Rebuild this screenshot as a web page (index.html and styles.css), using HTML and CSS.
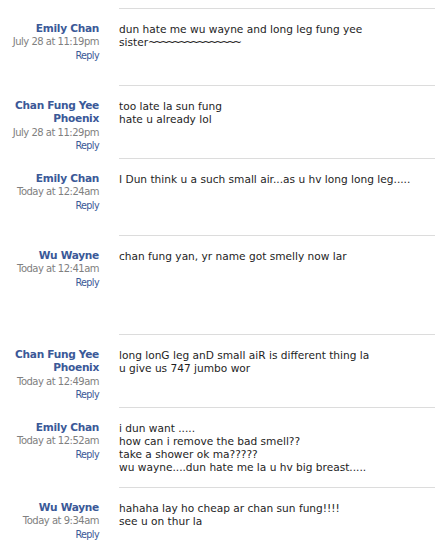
FILE: index.html
```html
<!DOCTYPE html>
<html>
<head>
<meta charset="utf-8">
<link rel="stylesheet" href="styles.css">
</head>
<body>
<div class="thread">
  <div class="comment">
    <div class="meta"><div class="name">Emily Chan</div><div class="date">July 28 at 11:19pm</div><a class="reply">Reply</a></div>
    <div class="body h77">dun hate me wu wayne and long leg fung yee<br>sister<span class="tildes">~~~~~~~~~~~~~~~</span></div>
  </div>
  <div class="comment">
    <div class="meta"><div class="name">Chan Fung Yee Phoenix</div><div class="date">July 28 at 11:29pm</div><a class="reply">Reply</a></div>
    <div class="body h73">too late la sun fung<br>hate u already lol</div>
  </div>
  <div class="comment">
    <div class="meta"><div class="name">Emily Chan</div><div class="date">Today at 12:24am</div><a class="reply">Reply</a></div>
    <div class="body h77">I Dun think u a such small air...as u hv long long leg.....</div>
  </div>
  <div class="comment">
    <div class="meta"><div class="name">Wu Wayne</div><div class="date">Today at 12:41am</div><a class="reply">Reply</a></div>
    <div class="body h99">chan fung yan, yr name got smelly now lar</div>
  </div>
  <div class="comment">
    <div class="meta"><div class="name">Chan Fung Yee Phoenix</div><div class="date">Today at 12:49am</div><a class="reply">Reply</a></div>
    <div class="body h73">long lonG leg anD small aiR is different thing la<br>u give us 747 jumbo wor</div>
  </div>
  <div class="comment">
    <div class="meta"><div class="name">Emily Chan</div><div class="date">Today at 12:52am</div><a class="reply">Reply</a></div>
    <div class="body h80">i dun want .....<br>how can i remove the bad smell??<br>take a shower ok ma?????<br>wu wayne....dun hate me la u hv big breast.....</div>
  </div>
  <div class="comment">
    <div class="meta"><div class="name">Wu Wayne</div><div class="date">Today at 9:34am</div><a class="reply">Reply</a></div>
    <div class="body h77">hahaha lay ho cheap ar chan sun fung!!!!<br>see u on thur la</div>
  </div>
</div>
</body>
</html>
```

FILE: styles.css
```css
html, body {
  margin: 0;
  padding: 0;
  background: #fff;
}
body {
  font-family: "DejaVu Sans", "Liberation Sans", sans-serif;
  color: #1e1e1e;
}
.thread {
  padding-top: 8px;
}
.comment {
  display: grid;
  grid-template-columns: 99px 1fr;
  column-gap: 20px;
}
.meta {
  text-align: right;
  padding-top: 14px;
  line-height: 13.4px;
}
.name {
  font-weight: bold;
  font-size: 10.6px;
  letter-spacing: -0.3px;
  color: #3b5998;
}
.date {
  font-size: 10px;
  letter-spacing: -0.5px;
  color: #808080;
}
.reply {
  display: block;
  font-size: 9.6px;
  letter-spacing: -0.6px;
  color: #3b5998;
  text-decoration: none;
}
.body {
  box-sizing: border-box;
  border-top: 1px solid #dcdcdc;
  padding-top: 13.5px;
  font-size: 10.6px;
  line-height: 13px;
}
.tildes {
  letter-spacing: -2.8px;
}
.h73 { height: 73px; }
.h77 { height: 77px; }
.h80 { height: 80px; }
.h99 { height: 99px; }
```
